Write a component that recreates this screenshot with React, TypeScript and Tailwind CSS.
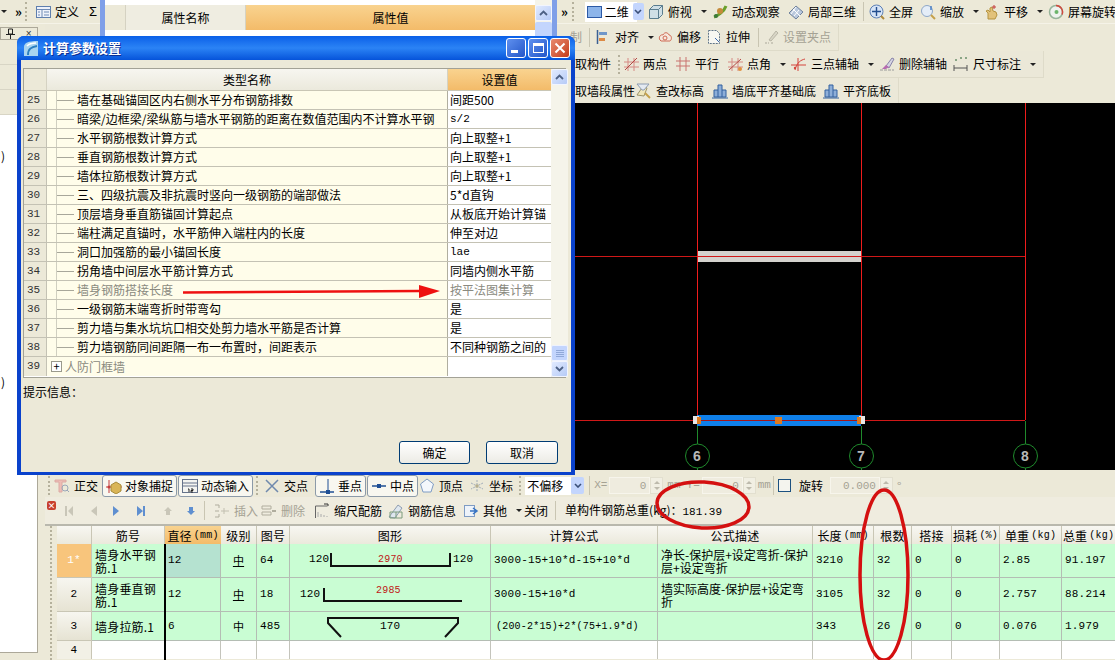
import React from "react";

const Svg = ({ children, w = 16, h = 16 }: { children: React.ReactNode; w?: number; h?: number }) => (
  <svg width={w} height={h} viewBox={`0 0 ${w} ${h}`} fill="none" className="shrink-0">
    {children}
  </svg>
);

const Caret = () => <span className="block w-0 h-0 shrink-0 border-x-[3px] border-x-transparent border-t-[3px] border-t-[#222]" />;
const Grip = () => <span className="block w-[3px] h-[19px] shrink-0 border-l-2 border-dotted border-[#b5b19c]" />;
const Sep = () => <span className="block w-px h-[19px] shrink-0 bg-[#c9c5b2]" />;

// toolbar icons
const icons: Record<string, React.ReactNode> = {
  define: (<><rect x="1.5" y="2.5" width="14" height="11" fill="#eef2fb" stroke="#5f7fae" /><path d="M1.5 5.5h14M7 5.5v8M9 8h5M9 11h5M3 8h2M3 11h2" stroke="#6f8bb5" /></>),
  rect: (<rect x="0.5" y="2.5" width="14" height="11" fill="#8db5ea" stroke="#2c5aa5" />),
  box: (<><path d="M1.5 5.5h9v9h-9zM1.5 5.5l4-4h9v9l-4 4M10.5 5.5l4-4" stroke="#5a7d8f" fill="#cfdfe6" /></>),
  orbit: (<><path d="M2 13C5 12 12 8 14 2" stroke="#6aa02c" strokeWidth="3" /><circle cx="8" cy="7" r="3" fill="#c58b3b" /><circle cx="4" cy="12" r="2" fill="#3d7a3d" /></>),
  part3d: (<><path d="M1 9l7-7 7 6-7 7z" fill="#b9c8dd" stroke="#71839c" /><path d="M5 5l7 7M8 3l-5 7M11 6l-5 6" stroke="#fff" /></>),
  full: (<><circle cx="7.5" cy="7.5" r="6.5" fill="#d6e4f7" stroke="#5c7fb5" /><path d="M7.5 3v9M3 7.5h9" stroke="#234e8f" strokeWidth="1.4" /><path d="M12 12l3 3" stroke="#b08a3c" strokeWidth="2" /></>),
  zoom: (<><circle cx="7" cy="7" r="5.5" fill="#e4edf8" stroke="#8ea7c8" /><path d="M11 11l4 4" stroke="#c5a04a" strokeWidth="2" /><path d="M11 2v4" stroke="#4a7fc5" strokeWidth="1.5" /></>),
  pan: (<><path d="M4 15V9l-2-2 2-1 2 2V4l2-1 1 4 3 1 1 3-2 4z" fill="#e2c27a" stroke="#b5933f" /><path d="M10 1v4M8 3h4" stroke="#c43d3d" /></>),
  rotate: (<><circle cx="8" cy="8" r="6.5" fill="#eef2ee" stroke="#98b59b" strokeWidth="1.5" /><path d="M8 1.5a6.5 6.5 0 0 1 6 9" stroke="#d04a3f" strokeWidth="1.5" /><circle cx="8.5" cy="8" r="2" fill="#6bb56b" /></>),
  align: (<><path d="M2.5 1v14" stroke="#3a5f93" strokeWidth="1.5" /><path d="M4 3h8v3H4z" fill="#6f96c9" /><path d="M4 9h6v3H4z" fill="#dd8a44" /></>),
  offset: (<><path d="M3 11c-2-3 1-6 3-5 1-3 5-3 6 0 3 0 3 5 1 6H4z" fill="#f6e8de" stroke="#cf6a54" /><circle cx="8" cy="9" r="2" stroke="#cf6a54" /></>),
  stretch: (<><path d="M2.5 1.5h8l3 3v10h-11z" fill="#f7f7f2" stroke="#5f7488" strokeDasharray="2 1" /><path d="M9 9l4 4" stroke="#3d6bb0" /></>),
  grip: (<><path d="M2 14h4M8 14h3" stroke="#aaa799" strokeDasharray="2 1" /><path d="M6 11l7-9 2 2-7 8z" fill="#d8d5c6" stroke="#b9b6a6" /></>),
  twoPt: (<><path d="M1 6h15M1 11h15M5 2v13M11 2v13" stroke="#d68a84" /><path d="M2 14L14 2" stroke="#b34a45" /></>),
  parallel: (<><path d="M1 5h14M1 10h14M5 1v14M11 1v14" stroke="#c9736e" /></>),
  angle: (<><path d="M1 6h15M1 11h15M5 2v13M11 2v13" stroke="#d68a84" /><path d="M2 14L14 3" stroke="#b34a45" /><circle cx="13" cy="13" r="2" fill="#e0913f" /></>),
  threePt: (<><path d="M0 9h15M7 2v13" stroke="#d4443c" /><path d="M4 14C6 6 10 4 14 3" stroke="#d4443c" /><circle cx="4" cy="12" r="1.2" fill="#d4443c" /></>),
  delAxis: (<><path d="M1 14h14" stroke="#9a9a9a" strokeDasharray="3 1" /><path d="M7 10l6-8 2 1-5 9z" fill="#d5d5e3" stroke="#8883a8" /><path d="M3 13l4-4 3 2-3 2z" fill="#b66bb0" /></>),
  dim: (<><path d="M1 9v6M14 9v6M1 12h13" stroke="#555" /><path d="M2 4h2M7 2h2M12 2h2" stroke="#6b8f6b" strokeWidth="1.5" /></>),
  check: (<><path d="M1 12l7-10 3 3-3 8z" fill="#f0e7bb" stroke="#9c936b" /><path d="M9 10l5 5" stroke="#c5a04a" strokeWidth="2" /><path d="M1 1h12l-5 6H6z" fill="#e4eaf1" stroke="#8c9cb1" /></>),
  wall: (<><path d="M2 14V7h4V2h4v5h4v7z" fill="#8daed8" stroke="#33609f" /><path d="M6 7v7M10 7v7M0 15h16" stroke="#33609f" /></>),
  ortho: (<><path d="M1 2h11v2H8v10H5V4H1z" fill="#eebcb5" stroke="#dcaaa4" /><circle cx="11" cy="10" r="3" stroke="#9aa7b9" /><path d="M13 12l2 2" stroke="#9aa7b9" /></>),
  snap: (<><path d="M0 9h16M3 2v13" stroke="#c43d3d" /><circle cx="3" cy="9" r="1.5" fill="#c43d3d" /><path d="M5 7l5-3 5 3v6l-5 3-5-3z" fill="#d9b557" stroke="#a88c3b" /></>),
  dyn: (<><rect x="0.5" y="1.5" width="15" height="13" fill="#f4f4f0" stroke="#66738a" /><path d="M1 5h14M1 8h14" stroke="#66738a" /><path d="M6 11h1v3M9 11h2v1.5H9V14h2" stroke="#222" /></>),
  cross: (<path d="M2 2l12 12M14 2L2 14" stroke="#6f89ad" strokeWidth="1.5" />),
  perp: (<><path d="M1 14h14" stroke="#1f4f95" strokeWidth="1.5" /><path d="M9 1v13" stroke="#1f4f95" /><rect x="7" y="12" width="4" height="4" fill="#1f4f95" /></>),
  mid: (<><path d="M1 8h14" stroke="#1f4f95" strokeWidth="1.5" /><rect x="6" y="6" width="4" height="4" fill="#1f4f95" /></>),
  vertex: (<path d="M8 1l6.5 5-2.5 8H4L1.5 6z" fill="#f4f7fb" stroke="#7f9cc4" />),
  coord: (<><path d="M8 2v12M2 5l12 6M14 5L2 11" stroke="#a2adba" strokeDasharray="2 1" /><rect x="6.5" y="6.5" width="3" height="3" fill="#b8b08e" /></>),
  insert: (<><path d="M1 2h4M1 8h4M1 14h4M5 2v3M5 11v3" stroke="#b0ad9e" /><path d="M7 8h8M10 5v6" stroke="#c2bfb0" /></>),
  del: (<><path d="M1 3h9v3H1zM1 9h9v3H1z" stroke="#b0ad9e" /><path d="M11 8h4" stroke="#b0ad9e" strokeWidth="2" /></>),
  scale: (<><path d="M1.5 15V3h12" stroke="#666" /><path d="M4 14V9M7 14V11M10 14V12M13 14v-1" stroke="#aaa" /><path d="M10 1h4v2" stroke="#333" /></>),
  info: (<><path d="M1 14L10 2l4 3-7 10z" fill="#dfe7ef" stroke="#8d9cb0" /><path d="M2 9h12v6H2z" stroke="#7d9c7d" /><path d="M8 9v6" stroke="#7d9c7d" /></>),
  other: (<><rect x="1.5" y="2.5" width="10" height="11" fill="#eef3fa" stroke="#7f9cc4" /><path d="M7 8h6M10 5l4 3-4 3" stroke="#3a75c4" strokeWidth="1.5" /></>),
};

const Tool = ({ icon, label, caret, gray, cls = "" }: { icon?: string; label: string; caret?: boolean; gray?: boolean; cls?: string }) => (
  <div className={`flex items-center gap-1 shrink-0 whitespace-nowrap ${gray ? "text-[#a5a294]" : "text-black"} ${cls}`}>
    {icon && <Svg>{icons[icon]}</Svg>}
    <span>{label}</span>
    {caret && <span className="ml-[5px] flex"><Caret /></span>}
  </div>
);

const PressedTool = ({ icon, label, cls = "" }: { icon: string; label: string; cls?: string }) => (
  <div className={`h-[22px] flex items-center gap-[3px] px-[3px] bg-[#f8f7f0] border border-[#8c9aa8] rounded-[3px] shrink-0 ${cls}`}>
    <Svg>{icons[icon]}</Svg>
    <span>{label}</span>
  </div>
);

const Spinner = () => (
  <div className="w-[13px] h-[17px] flex flex-col items-center justify-center gap-[3px] bg-[#f1efe3] border border-[#e2dfcf] shrink-0">
    <span className="w-0 h-0 border-x-[3px] border-x-transparent border-b-[3px] border-b-[#bdbaac]" />
    <span className="w-0 h-0 border-x-[3px] border-x-transparent border-t-[3px] border-t-[#bdbaac]" />
  </div>
);

const DisabledInput = ({ value, w }: { value: string; w: string }) => (
  <div className={`${w} h-[17px] bg-[#efecdf] border border-[#f7f5ec] text-right pr-[3px] leading-[16px] font-['Liberation_Mono'] text-[11px] text-[#a5a294] shrink-0`}>
    {value}
  </div>
);

const MONO = "font-['Liberation_Mono'] text-[11px]";
const UNIT = "font-['Liberation_Mono'] text-[10px] ml-[2px]";

// dialog params table
const params: { n: number; name: string; value?: string; gray?: boolean; mono?: boolean; expand?: boolean }[] = [
  { n: 25, name: "墙在基础锚固区内右侧水平分布钢筋排数", value: "间距500" },
  { n: 26, name: "暗梁/边框梁/梁纵筋与墙水平钢筋的距离在数值范围内不计算水平钢", value: "s/2", mono: true },
  { n: 27, name: "水平钢筋根数计算方式", value: "向上取整+1" },
  { n: 28, name: "垂直钢筋根数计算方式", value: "向上取整+1" },
  { n: 29, name: "墙体拉筋根数计算方式", value: "向上取整+1" },
  { n: 30, name: "三、四级抗震及非抗震时竖向一级钢筋的端部做法", value: "5*d直钩" },
  { n: 31, name: "顶层墙身垂直筋锚固计算起点", value: "从板底开始计算锚" },
  { n: 32, name: "端柱满足直锚时，水平筋伸入端柱内的长度", value: "伸至对边" },
  { n: 33, name: "洞口加强筋的最小锚固长度", value: "lae", mono: true },
  { n: 34, name: "拐角墙中间层水平筋计算方式", value: "同墙内侧水平筋" },
  { n: 35, name: "墙身钢筋搭接长度", value: "按平法图集计算", gray: true },
  { n: 36, name: "一级钢筋末端弯折时带弯勾", value: "是" },
  { n: 37, name: "剪力墙与集水坑坑口相交处剪力墙水平筋是否计算", value: "是" },
  { n: 38, name: "剪力墙钢筋同间距隔一布一布置时，间距表示", value: "不同种钢筋之间的" },
  { n: 39, name: "人防门框墙", gray: true, expand: true },
];

const ScrollBtn = ({ down }: { down?: boolean }) => (
  <div className="w-[17px] h-[16px] rounded-[2px] bg-gradient-to-br from-[#e1eafe] to-[#b6cbf7] border border-[#f2f5fe] flex items-center justify-center">
    <svg width="9" height="6" viewBox="0 0 9 6" fill="none">
      <path d={down ? "M1 1l3.5 3.5L8 1" : "M1 5l3.5-3.5L8 5"} stroke="#4d6185" strokeWidth="1.8" />
    </svg>
  </div>
);

const ParamsDialog = () => (
  <div className="absolute left-[17px] top-[36px] w-[558px] h-[439px] flex flex-col bg-[#0a42cc] rounded-t-[7px] z-20">
    {/* title bar */}
    <div className="h-[24px] shrink-0 flex items-center pl-[6px] pr-[5px] rounded-t-[7px] bg-gradient-to-b from-[#0a5fe8] via-[#2b83f5] to-[#0653da]">
      <svg width="17" height="17" viewBox="0 0 17 17" fill="none" className="shrink-0">
        <path d="M1 16V7C1 3 5 1 15 1v15z" fill="#a9d4f0" />
        <path d="M5 15c0-6 3-8 9-9" stroke="#2b7fc0" strokeWidth="2" />
        <path d="M4 6c2-2 5-3 9-3" stroke="#fff" strokeWidth="1.5" />
      </svg>
      <span className="ml-[3px] text-white text-[13px] font-bold [text-shadow:1px_1px_#0a2f94]">计算参数设置</span>
      <div className="ml-auto flex gap-[2px]">
        <div className="w-[20px] h-[20px] rounded-[3px] border border-white bg-gradient-to-br from-[#5f90ef] to-[#2456c8] flex items-end pl-[4px] pb-[4px]">
          <span className="w-[7px] h-[3px] bg-white" />
        </div>
        <div className="w-[20px] h-[20px] rounded-[3px] border border-white bg-gradient-to-br from-[#5f90ef] to-[#2456c8] flex items-center justify-center">
          <span className="w-[11px] h-[10px] border border-white border-t-[3px]" />
        </div>
        <div className="w-[20px] h-[20px] rounded-[3px] border border-white bg-gradient-to-br from-[#e88a6e] to-[#c43a15] flex items-center justify-center">
          <svg width="12" height="12" viewBox="0 0 12 12" fill="none"><path d="M1.5 1.5l9 9M10.5 1.5l-9 9" stroke="#fff" strokeWidth="2" /></svg>
        </div>
      </div>
    </div>
    {/* body */}
    <div className="flex-1 mx-[4px] mb-[3px] bg-[#ece9d8] flex flex-col pl-[2px] pr-[5px] pt-[8px] text-[12px] text-black min-h-0">
      <div className="h-[310px] border border-[#a3a296] bg-white flex shrink-0">
        <div className="w-[527px]">
          <div className="h-[22px] grid grid-cols-[23px_401px_103px] bg-gradient-to-b from-[#f7f6f0] to-[#ebe9dc] border-b border-[#c9c6b5]">
            <div className="border-r border-[#d5d2c2] bg-[#ece9d8]" />
            <div className="flex items-center justify-center border-r border-[#d5d2c2]">类型名称</div>
            <div className="flex items-center justify-center bg-gradient-to-b from-[#f9d38f] to-[#f3bb69]">设置值</div>
          </div>
          {params.map((p) => (
            <div key={p.n} className="h-[19px] grid grid-cols-[23px_401px_103px] border-b border-[#c4c2b4] last:border-b-0">
              <div className={`flex items-center pl-[3px] bg-[#ece9d8] border-r border-[#c4c2b4] text-[#333] ${MONO}`}>{p.n}</div>
              <div className={`flex items-center bg-[#fffdea] border-r border-[#b0ae9f] whitespace-nowrap overflow-hidden ${p.gray ? "text-[#8a8a80]" : ""}`}>
                {p.expand ? (
                  <span className="ml-[4px] mr-[3px] w-[11px] h-[11px] border border-[#9a9a8c] bg-white flex items-center justify-center text-[11px] leading-none text-black">+</span>
                ) : (
                  <>
                    <span className="ml-[9px] h-full border-l border-[#d0cfc0]" />
                    <span className="w-[17px] h-px bg-[#a8a79a]" />
                    <span className="w-[3px]" />
                  </>
                )}
                {p.name}
              </div>
              <div className={`flex items-center pl-[2px] whitespace-nowrap overflow-hidden ${p.gray ? "text-[#8a8a80]" : ""} ${p.mono ? MONO : ""}`}>
                {p.value}
              </div>
            </div>
          ))}
        </div>
        <div className="w-[18px] ml-auto flex flex-col bg-[#f5f4ea]">
          <ScrollBtn />
          <div className="flex-1 flex flex-col justify-end items-center">
            <div className="w-[17px] h-[16px] rounded-[2px] bg-[#c3d5fd] border border-[#eef2fe] flex flex-col items-center justify-center gap-px">
              <span className="w-[8px] h-px bg-[#90a8d8]" />
              <span className="w-[8px] h-px bg-[#90a8d8]" />
              <span className="w-[8px] h-px bg-[#90a8d8]" />
              <span className="w-[8px] h-px bg-[#90a8d8]" />
            </div>
          </div>
          <ScrollBtn down />
        </div>
      </div>
      <div className="mt-[6px] h-[16px] leading-[16px]">提示信息：</div>
      <div className="mt-auto mb-[8px] flex justify-end gap-[16px] pr-[8px]">
        <button className="w-[71px] h-[23px] rounded-[3px] border border-[#003c74] bg-gradient-to-b from-white to-[#ecebe5] text-[12px]">确定</button>
        <button className="w-[72px] h-[23px] rounded-[3px] border border-[#003c74] bg-gradient-to-b from-white to-[#ecebe5] text-[12px]">取消</button>
      </div>
    </div>
  </div>
);

// window sitting behind the dialog
const PropertyWindow = () => (
  <div className="absolute left-[100px] top-0 w-[457px] h-[40px] bg-[#7f9fe8] pl-[5px] pr-[5px] z-10">
    <div className="h-full bg-white flex text-[12px]">
      <div className="flex-1">
        <div className="h-[30px] pt-[5px] grid grid-cols-[21px_120px_1fr]">
          <div className="bg-[#ece9d8] border-r border-[#d5d2c2]" />
          <div className="flex items-center justify-center bg-[#efede1] border-r border-[#d5d2c2]">属性名称</div>
          <div className="flex items-center justify-center bg-gradient-to-b from-[#f9d38f] to-[#f3bb69]">属性值</div>
        </div>
      </div>
      <div className="w-[17px] flex flex-col bg-[#f5f4ea] pt-[5px]">
        <ScrollBtn />
        <div className="h-[16px] mt-px rounded-[2px] bg-[#c3d5fd]" />
      </div>
    </div>
  </div>
);

const MainToolbar = () => (
  <div className="h-[24px] shrink-0 flex items-center bg-[#ece9d8] border-b border-[#f5f3e8] text-[12px]">
    <span className="ml-[1px]"><Caret /></span>
    <span className="ml-[8px] w-[10px] text-[13px] font-bold leading-none">»</span>
    <span className="ml-[3px]"><Grip /></span>
    <Tool icon="define" label="定义" cls="ml-[7px]" />
    <span className="ml-[10px] text-[13px] font-['Liberation_Sans']">Σ</span>
    <span className="ml-[464px] w-[10px] text-[13px] font-bold leading-none">»</span>
    <span className="ml-[4px]"><Grip /></span>
    <div className="ml-[10px] w-[52px] h-[20px] bg-white flex items-center pl-[2px] gap-[2px] shrink-0">
      <Svg>{icons.rect}</Svg>
      <span>二维</span>
    </div>
    <div className="w-[11px] h-[17px] -ml-[4px] bg-[#c3d5fd] rounded-[2px] flex items-center justify-center shrink-0">
      <svg width="8" height="5" viewBox="0 0 8 5" fill="none"><path d="M1 1l3 3 3-3" stroke="#3a4f78" strokeWidth="1.6" /></svg>
    </div>
    <Tool icon="box" label="俯视" caret cls="ml-[4px]" />
    <Tool icon="orbit" label="动态观察" cls="ml-[5px]" />
    <Tool icon="part3d" label="局部三维" cls="ml-[8px]" />
    <span className="ml-[7px]"><Sep /></span>
    <Tool icon="full" label="全屏" cls="ml-[5px]" />
    <Tool icon="zoom" label="缩放" caret cls="ml-[7px]" />
    <Tool icon="pan" label="平移" caret cls="ml-[5px]" />
    <Tool icon="rotate" label="屏幕旋转" cls="ml-[5px]" />
  </div>
);

const TopToolbars = () => (
  <div className="h-[79px] shrink-0 text-[12px] flex flex-col">
    <div className="h-[27px] w-fit pr-[7px] flex items-center bg-[#ebe8d8] border-r border-b border-[#dedbc9] pl-[525px]">
      <span className="text-[#a5a294] w-[12px] overflow-hidden shrink-0">制</span>
      <span className="ml-[7px]"><Sep /></span>
      <Tool icon="align" label="对齐" caret cls="ml-[5px]" />
      <Tool icon="offset" label="偏移" cls="ml-[3px]" />
      <Tool icon="stretch" label="拉伸" cls="ml-[5px]" />
      <span className="ml-[8px]"><Sep /></span>
      <Tool icon="grip" label="设置夹点" gray cls="ml-[4px]" />
    </div>
    <div className="h-[27px] w-fit pr-[7px] flex items-center bg-[#ebe8d8] border-r border-b border-[#dedbc9] pl-[530px]">
      <span className="shrink-0">取构件</span>
      <span className="ml-[7px]"><Grip /></span>
      <Tool icon="twoPt" label="两点" cls="ml-[2px]" />
      <Tool icon="parallel" label="平行" cls="ml-[8px]" />
      <Tool icon="angle" label="点角" caret cls="ml-[8px]" />
      <Tool icon="threePt" label="三点辅轴" caret cls="ml-[5px]" />
      <Tool icon="delAxis" label="删除辅轴" cls="ml-[5px]" />
      <Tool icon="dim" label="尺寸标注" caret cls="ml-[6px]" />
    </div>
    <div className="h-[25px] w-fit pr-[7px] flex items-center bg-[#ebe8d8] border-r border-[#dedbc9] pl-[530px]">
      <span className="shrink-0">取墙段属性</span>
      <Tool icon="check" label="查改标高" cls="ml-[1px]" />
      <Tool icon="wall" label="墙底平齐基础底" cls="ml-[8px]" />
      <Tool icon="wall" label="平齐底板" cls="ml-[7px]" />
    </div>
  </div>
);

// canvas drawing, coordinates are relative to the canvas box (x-45, y-103)
const CadCanvas = () => (
  <div className="h-[367px] shrink-0 bg-black relative">
    <svg width="1070" height="367" viewBox="0 0 1070 367" fill="none" className="block">
      <rect x="652" y="148" width="164" height="11" fill="#d4d2ce" />
      <path d="M520 153.5H980M520 317.5H980" stroke="#d01818" />
      <path d="M652.5 0V317M816.5 0V317M980.5 0V317" stroke="#ee1c1c" />
      <rect x="652" y="312" width="164" height="11" fill="#0f7fe8" />
      <path d="M652 317.5H816" stroke="#a81414" />
      <rect x="648" y="313" width="6" height="8" fill="#e8e8e8" />
      <rect x="814" y="313" width="6" height="8" fill="#e8e8e8" />
      <rect x="652" y="314" width="4" height="7" fill="#e07b1e" />
      <rect x="730" y="314" width="7" height="7" fill="#e07b1e" />
      <rect x="812" y="314" width="4" height="7" fill="#e07b1e" />
      <path d="M652.5 323V341M816.5 323V341M980.5 318V341M652.5 365V367M816.5 365V367M980.5 365V367" stroke="#1f8a2c" />
      <circle cx="652.5" cy="353" r="12" stroke="#1f8a2c" />
      <circle cx="816.5" cy="353" r="12" stroke="#1f8a2c" />
      <circle cx="980.5" cy="353" r="12" stroke="#1f8a2c" />
    </svg>
    <span className="absolute left-[648px] top-[343px] text-[#b8b8b8] text-[14px] font-bold font-['Liberation_Sans']">6</span>
    <span className="absolute left-[812px] top-[343px] text-[#b8b8b8] text-[14px] font-bold font-['Liberation_Sans']">7</span>
    <span className="absolute left-[976px] top-[343px] text-[#b8b8b8] text-[14px] font-bold font-['Liberation_Sans']">8</span>
  </div>
);

const SnapBar = () => (
  <div className="h-[27px] shrink-0 w-[867px] flex items-center bg-[#ece9d8] text-[12px] pl-[3px] pt-[4px]">
    <Grip />
    <Tool icon="ortho" label="正交" cls="ml-[3px]" />
    <PressedTool icon="snap" label="对象捕捉" cls="ml-[4px]" />
    <PressedTool icon="dyn" label="动态输入" cls="ml-px" />
    <span className="ml-[3px]"><Grip /></span>
    <Tool icon="cross" label="交点" cls="ml-[5px]" />
    <PressedTool icon="perp" label="垂点" cls="ml-[7px]" />
    <PressedTool icon="mid" label="中点" cls="ml-px" />
    <Tool icon="vertex" label="顶点" cls="ml-[1px]" />
    <Tool icon="coord" label="坐标" cls="ml-[6px]" />
    <span className="ml-[6px]"><Grip /></span>
    <div className="ml-[3px] w-[46px] h-[18px] bg-white leading-[18px] pl-[2px] shrink-0">不偏移</div>
    <div className="w-[13px] h-[17px] bg-[#c3d5fd] rounded-[2px] flex items-center justify-center shrink-0">
      <svg width="8" height="5" viewBox="0 0 8 5" fill="none"><path d="M1 1l3 3 3-3" stroke="#3a4f78" strokeWidth="1.6" /></svg>
    </div>
    <span className="ml-[5px]"><Sep /></span>
    <span className={`ml-[4px] text-[#a5a294] ${MONO}`}>X=</span>
    <span className="ml-[2px]"><DisabledInput value="0" w="w-[41px]" /></span>
    <Spinner />
    <span className={`ml-[4px] text-[#a5a294] ${MONO}`}>mm</span>
    <span className={`ml-[6px] text-[#a5a294] ${MONO}`}>Y=</span>
    <span className="ml-[2px]"><DisabledInput value="0" w="w-[41px]" /></span>
    <Spinner />
    <span className={`ml-[2px] text-[#a5a294] ${MONO}`}>mm</span>
    <span className="ml-[2px]"><Sep /></span>
    <span className="ml-[4px] w-[13px] h-[13px] border border-[#1c5180] bg-[#f4f4ee] shrink-0" />
    <span className="ml-[8px] shrink-0">旋转</span>
    <span className="ml-[7px]"><DisabledInput value="0.000" w="w-[50px]" /></span>
    <Spinner />
    <span className="ml-[4px] text-[#a5a294]">°</span>
  </div>
);

const NavIcon = ({ d, fill }: { d: string; fill: string }) => (
  <svg width="10" height="12" viewBox="0 0 10 12" className="shrink-0"><path d={d} fill={fill} /></svg>
);

const NavHolder = () => (
  <div className="flex items-center ml-[8px]">
    <NavIcon d="M1 1h2v10H1zM9 1v10L4 6z" fill="#c9c6b8" />
    <span className="ml-[15px]"><NavIcon d="M8 1v10L2 6z" fill="#c9c6b8" /></span>
    <span className="ml-[12px]"><NavIcon d="M2 1v10l6-5z" fill="#5f8fd0" /></span>
    <span className="ml-[15px]"><NavIcon d="M1 1v10l6-5zM7 1h2v10H7z" fill="#5f8fd0" /></span>
    <span className="ml-[17px]"><NavIcon d="M5 2l4 4H7v4H3V6H1z" fill="#c9c6b8" /></span>
    <span className="ml-[13px]"><NavIcon d="M5 10l4-4H7V2H3v4H1z" fill="#5f8fd0" /></span>
  </div>
);

const RebarBar = () => (
  <div className="h-[29px] shrink-0 flex items-center bg-[#efecdf] text-[12px] pl-[2px] border-b-2 border-[#b9b8ad]">
    <span className="w-[9px] h-[9px] mb-[10px] rounded-[2px] bg-[#c8402e] text-white text-[8px] leading-[9px] text-center font-bold shrink-0">×</span>
    <NavHolder />
    <span className="ml-[8px]"><Sep /></span>
    <Tool icon="insert" label="插入" gray cls="ml-[9px]" />
    <Tool icon="del" label="删除" gray cls="ml-[3px]" />
    <Tool icon="scale" label="缩尺配筋" cls="ml-[9px]" />
    <Tool icon="info" label="钢筋信息" cls="ml-[6px]" />
    <Tool icon="other" label="其他" caret cls="ml-[7px]" />
    <span className="ml-[2px] shrink-0">关闭</span>
    <span className="ml-[7px]"><Sep /></span>
    <span className="ml-[9px] shrink-0 whitespace-nowrap">单构件钢筋总重(kg)：<span className={MONO}>181.39</span></span>
  </div>
);

const rebarCols = "grid-cols-[35px_73px_56px_36px_33px_201px_167px_155px_61px_38px_40px_48px_62px_54px]";
const headCell = "flex items-center justify-center whitespace-nowrap bg-gradient-to-b from-[#f8f7f2] to-[#ebe9dc] border-r border-[#c9c6b5]";
const cell = "flex items-center bg-[#c9fdd3] border-r border-b border-[#b4bdb4] pl-[3px] overflow-hidden";

const rebarRows = [
  { no: "1*", name: "墙身水平钢筋.1", dia: "12", grade: true, fig: "64", formula: "3000-15+10*d-15+10*d", desc: "净长-保护层+设定弯折-保护层+设定弯折", len: "3210", count: "32", unit: "2.85", total: "91.197" },
  { no: "2", name: "墙身垂直钢筋.1", dia: "12", grade: true, fig: "18", formula: "3000-15+10*d", desc: "墙实际高度-保护层+设定弯折", len: "3105", count: "32", unit: "2.757", total: "88.214" },
  { no: "3", name: "墙身拉筋.1", dia: "6", grade: false, fig: "485", formula: "(200-2*15)+2*(75+1.9*d)", desc: "", len: "343", count: "26", unit: "0.076", total: "1.979" },
];

const redNum = "absolute text-[#c01818] font-['Liberation_Mono'] text-[10px]";
const blackNum = "absolute text-black font-['Liberation_Mono'] text-[11px]";

const Shape = ({ row }: { row: number }) => {
  if (row === 0)
    return (
      <div className="relative w-full h-full">
        <span className={`${blackNum} left-[19px] top-[9px]`}>120</span>
        <svg width="201" height="34" className="absolute left-0 top-0" fill="none"><path d="M41 9V22H160V9" stroke="#111" strokeWidth="2" /></svg>
        <span className={`${redNum} left-[88px] top-[9px]`}>2970</span>
        <span className={`${blackNum} left-[163px] top-[9px]`}>120</span>
      </div>
    );
  if (row === 1)
    return (
      <div className="relative w-full h-full">
        <span className={`${blackNum} left-[10px] top-[10px]`}>120</span>
        <svg width="201" height="34" className="absolute left-0 top-0" fill="none"><path d="M34 10V23H172" stroke="#111" strokeWidth="2" /></svg>
        <span className={`${redNum} left-[86px] top-[6px]`}>2985</span>
      </div>
    );
  return (
    <div className="relative w-full h-full">
      <svg width="201" height="29" className="absolute left-0 top-0" fill="none"><path d="M51 25L38 11V6H168V11L155 25" stroke="#111" strokeWidth="2" /></svg>
      <span className={`${blackNum} left-[90px] top-[8px]`}>170</span>
    </div>
  );
};

const RebarTable = () => (
  <div className="flex-1 flex min-h-0">
    <span className="block ml-[5px] mr-[5px] w-[2px] border-l-2 border-dotted border-[#b5b19c]" />
    <div className={`grid w-fit ${rebarCols} grid-rows-[18px_34px_34px_29px_18px] text-[12px] leading-[13px] tracking-[0.2px] text-black relative`}>
      <div className={headCell} />
      <div className={headCell}>筋号</div>
      <div className="flex items-center justify-center whitespace-nowrap bg-gradient-to-b from-[#f9d38f] to-[#f3bb69]">
        直径<span className={UNIT}>(mm)</span>
      </div>
      {["级别", "图号", "图形", "计算公式", "公式描述"].map((t) => (
        <div key={t} className={headCell}>{t}</div>
      ))}
      <div className={headCell}>长度<span className={UNIT}>(mm)</span></div>
      <div className={headCell}>根数</div>
      <div className={headCell}>搭接</div>
      <div className={headCell}>损耗<span className={UNIT}>(%)</span></div>
      <div className={headCell}>单重<span className={UNIT}>(kg)</span></div>
      <div className={headCell}>总重<span className={UNIT}>(kg)</span></div>

      {rebarRows.map((r, i) => (
        <React.Fragment key={r.no}>
          <div className={`flex items-center justify-center border-b border-r border-[#c9c6b5] ${MONO} ${i === 0 ? "bg-[#f8c57c] text-white" : "bg-gradient-to-b from-[#f7f6f0] to-[#e6e3d3]"}`}>
            {r.no}
          </div>
          <div className={cell}>{r.name}</div>
          <div className={`${cell} ${MONO} ${i === 0 ? "!bg-[#b5e2d0]" : ""}`}>{r.dia}</div>
          <div className={`${cell} justify-center !pl-0 text-[11px]`}>
            <span className={r.grade ? "underline underline-offset-[1px]" : ""}>中</span>
          </div>
          <div className={`${cell} ${MONO}`}>{r.fig}</div>
          <div className={`${cell} !p-0`}><Shape row={i} /></div>
          <div className={i === 2 ? `${cell} font-['Liberation_Mono'] text-[10px] !pl-[5px]` : `${cell} ${MONO}`}>{r.formula}</div>
          <div className={`${cell} tracking-normal`}>{r.desc}</div>
          <div className={`${cell} ${MONO}`}>{r.len}</div>
          <div className={`${cell} ${MONO}`}>{r.count}</div>
          <div className={`${cell} ${MONO}`}>0</div>
          <div className={`${cell} ${MONO}`}>0</div>
          <div className={`${cell} ${MONO}`}>{r.unit}</div>
          <div className={`${cell} ${MONO}`}>{r.total}</div>
        </React.Fragment>
      ))}

      <div className={`flex items-center justify-center bg-[#f2f0e6] border-r border-[#c9c6b5] ${MONO}`}>4</div>
      {Array.from({ length: 13 }).map((_, i) => (
        <div key={i} className="bg-white border-r border-[#c4c4bc]" />
      ))}
      <span className="absolute left-[107px] top-[18px] bottom-0 w-[2px] bg-black" />
    </div>
  </div>
);

// red marker annotations drawn over the screenshot
const Annotations = () => (
  <svg width="1115" height="660" viewBox="0 0 1115 660" fill="none" className="absolute left-0 top-0 z-30 pointer-events-none">
    <path d="M183 292.5L420 291" stroke="#ee1111" strokeWidth="2.5" />
    <path d="M419 285L440 291L419 298z" fill="#ee1111" />
    <ellipse cx="703" cy="505" rx="46" ry="23" stroke="#d41010" strokeWidth="3.5" transform="rotate(3 703 505)" />
    <ellipse cx="884" cy="575" rx="24" ry="85" stroke="#d41010" strokeWidth="3.5" />
  </svg>
);

export default function App() {
  return (
    <div className="relative w-[1115px] h-[660px] overflow-hidden flex flex-col bg-[#ece9d8] font-['Noto_Sans_CJK_SC',sans-serif]">
      <MainToolbar />
      <div className="flex-1 flex min-h-0">
        {/* left panel */}
        <div className="w-[45px] shrink-0 flex flex-col">
          <div className="mt-[3px] w-[38px] h-[13px] border border-[#aca899] flex items-center justify-around text-[10px] text-[#333]">
            <svg width="9" height="11" viewBox="0 0 9 11" fill="none"><path d="M2.5 1h4v5h-4zM0 6.5h9M4.5 7v4" stroke="#222" /></svg>
            <span className="font-['Liberation_Sans']">×</span>
          </div>
          <div className="w-[38px] h-[25px] border-b border-[#d8d5c5]" />
          <div className="w-[38px] h-[25px] border-b border-[#d8d5c5]" />
          <div className="w-[38px] h-[25px] border-b border-[#d8d5c5]" />
          <div className="w-[38px] flex-1 bg-white border-r border-b border-[#aca899] relative mb-[7px]">
            <span className="absolute left-[1px] top-[32px] text-[12px]">)</span>
            <span className="absolute left-[1px] top-[258px] text-[12px]">)</span>
          </div>
        </div>
        {/* main column */}
        <div className="flex-1 flex flex-col min-w-0">
          <TopToolbars />
          <CadCanvas />
          <SnapBar />
          <RebarBar />
          <RebarTable />
        </div>
      </div>
      <PropertyWindow />
      <ParamsDialog />
      <Annotations />
    </div>
  );
}
